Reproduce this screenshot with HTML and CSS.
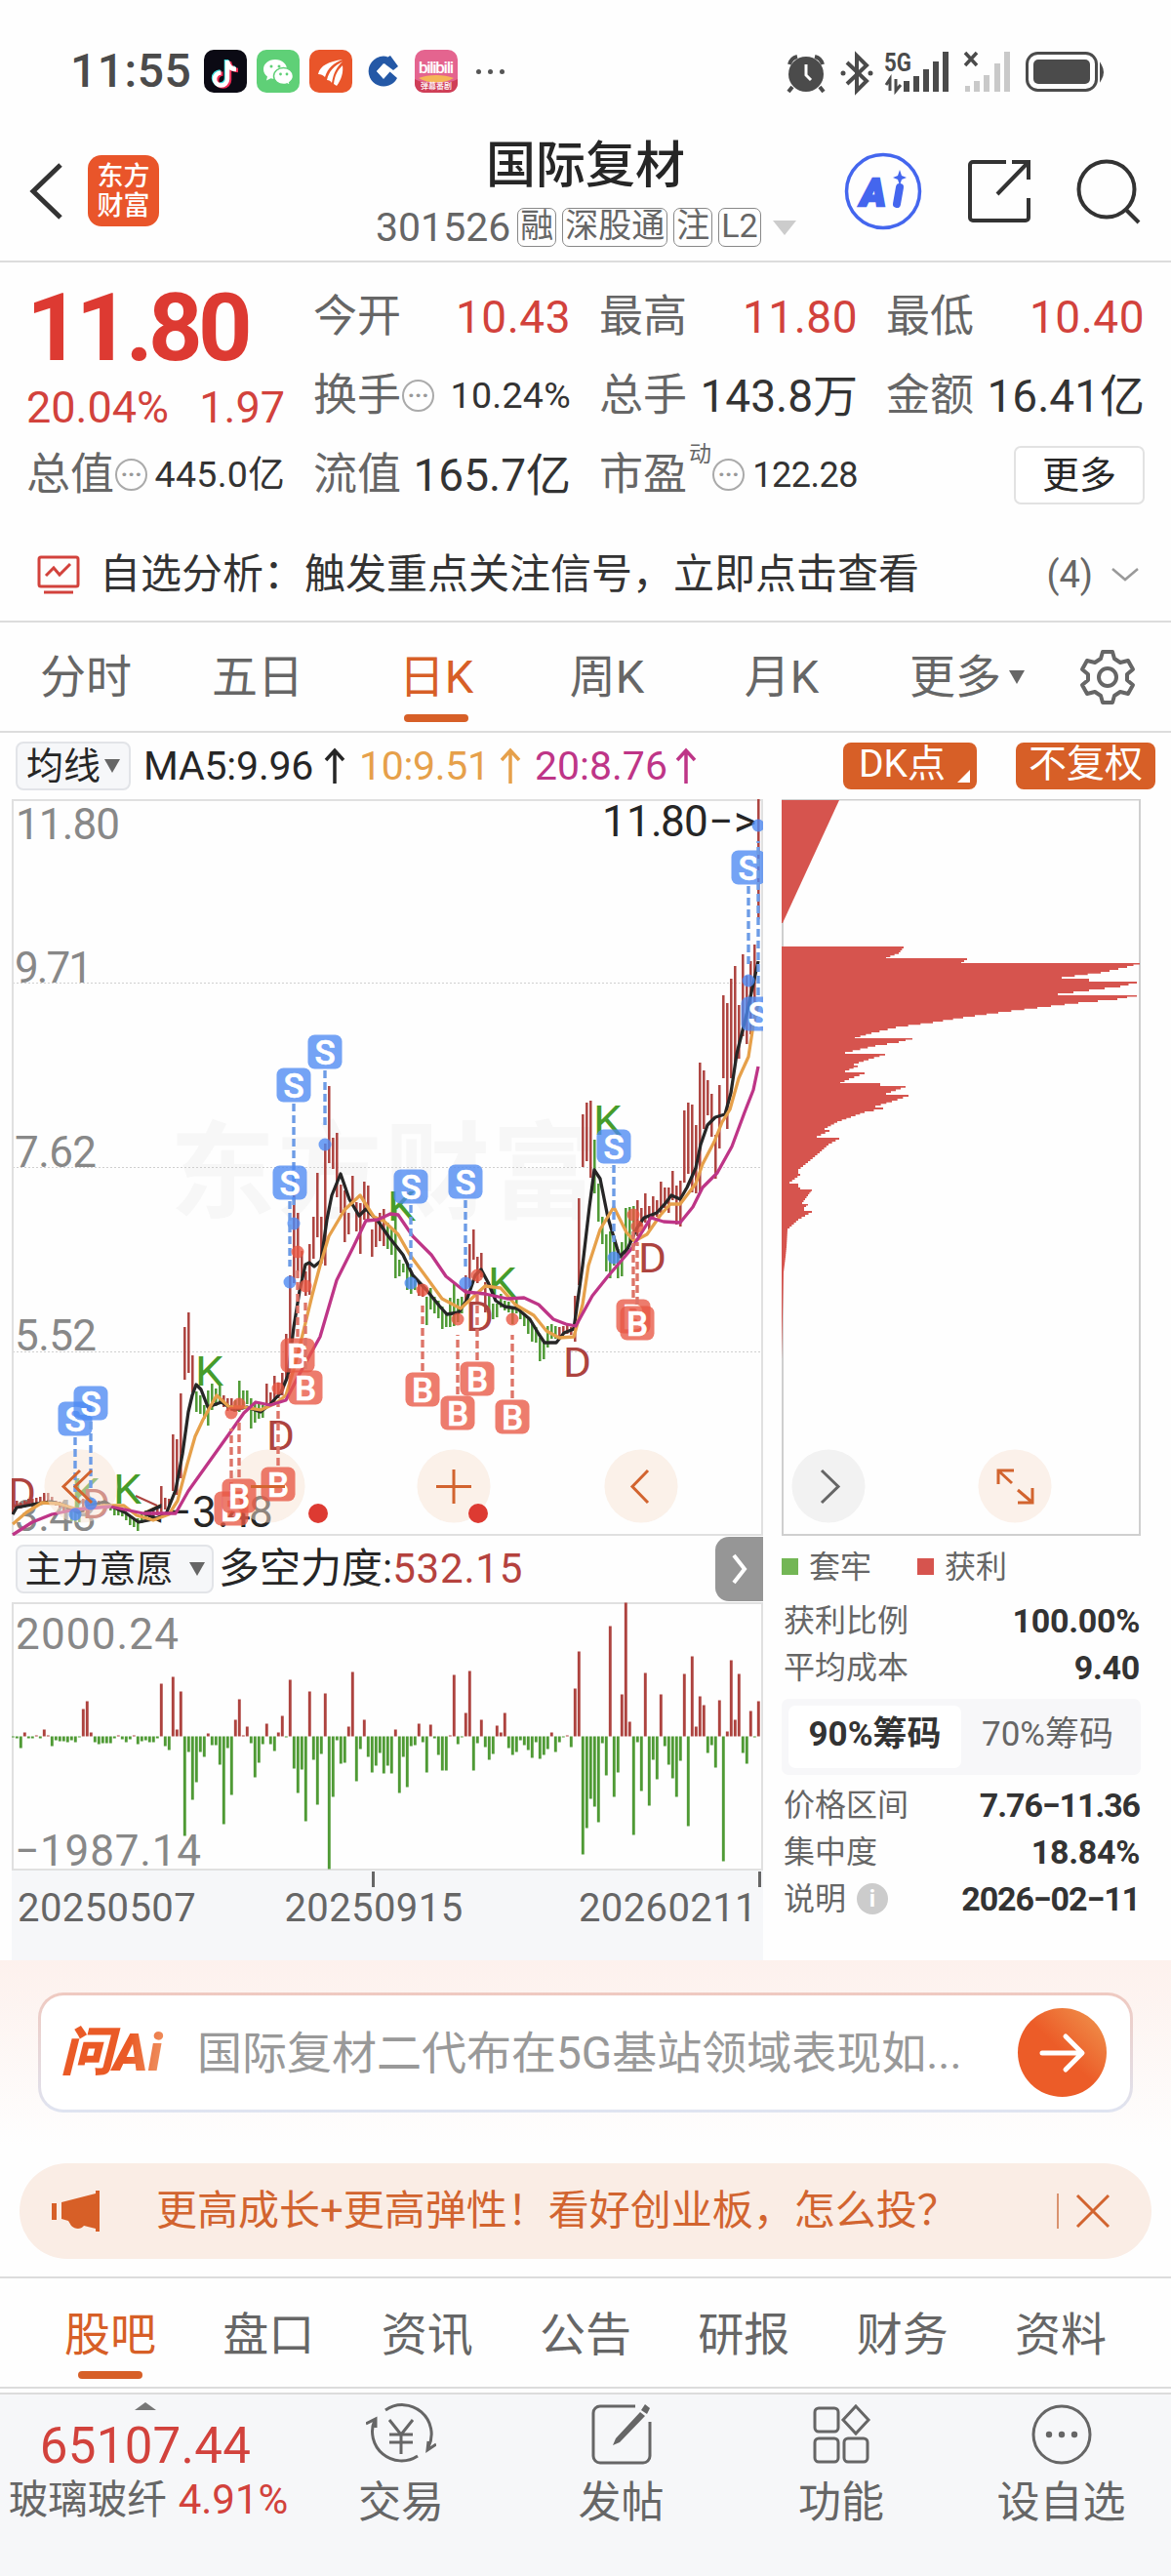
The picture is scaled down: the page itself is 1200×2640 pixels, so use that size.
FILE: index.html
```html
<!DOCTYPE html>
<html lang="zh-CN">
<head>
  <meta charset="UTF-8">
  <meta name="viewport" content="width=device-width, initial-scale=1.0">
  <title>国际复材 301526</title>
  <link rel="stylesheet" href="styles.css">
  <script src="chart.js" defer></script>
</head>
<body>

  <!-- Phone status bar -->
  <div class="status-bar">
    <div class="status-left">
      <span class="clock">11:55</span>
      <svg class="app-icon" viewBox="0 0 44 44">
        <rect width="44" height="44" rx="10" fill="#0b0a14"/>
        <g fill="none" stroke-width="4.5">
          <path d="M22 9v19a6.500 6.500 0 1 1-6.500-6.500M22 10c1 5 4 8 9 8" stroke="#3de0e0" transform="translate(1 1)"/>
          <path d="M25 10v19a6.500 6.500 0 1 1-6.500-6.500M25 11c1 5 4 8 9 8" stroke="#ee2d55" transform="translate(1 2)"/>
          <path d="M24 9v19a6.500 6.500 0 1 1-6.500-6.500M24 10c1 5 4 8 9 8" stroke="#fff" transform="translate(0 2)"/>
        </g>
      </svg>
      <svg class="app-icon" viewBox="0 0 44 44">
        <rect width="44" height="44" rx="10" fill="#5fd077"/>
        <path d="M19 10c-7 0-12 4.500-12 10 0 3 1.600 5.600 4 7.500l-1 4 4.500-2.300c1.400.4 3 .8 4.500.8 7 0 12-4.500 12-10s-5-10-12-10z" fill="#fff"/>
        <path d="M27.500 18.500c-5.500 0-10 3.800-10 8.500s4.500 8.500 10 8.500c1.200 0 2.500-.2 3.500-.6l3.500 1.800-.8-3.200c2.300-1.600 3.800-3.900 3.800-6.500 0-4.700-4.500-8.500-10-8.500z" fill="#fff" stroke="#5fd077" stroke-width="1.500"/>
        <g fill="#5fd077"><circle cx="15" cy="17" r="1.500"/><circle cx="23" cy="17" r="1.500"/><circle cx="24.500" cy="25" r="1.400"/><circle cx="31" cy="25" r="1.400"/></g>
      </svg>
      <svg class="app-icon" viewBox="0 0 44 44">
        <rect width="44" height="44" rx="10" fill="#e9552a"/>
        <path d="M9 25c2-9 11-13 25-15-9 4-15 8-18 18-2-2-4-3-7-3zM18 31c2-9 7-14 16-19-6 6-9 11-11 22-1-2-3-3-5-3zM25 35c1-9 4-14 9-19 1 7-1 14-6 21z" fill="#fff"/>
      </svg>
      <svg class="app-icon ccb" viewBox="0 0 32 32">
        <path d="M20 1A15.500 15.500 0 1 0 30 23L22 16l-6 7-7-7 8-8z" fill="#2458a6"/>
        <path d="M14 5l9-5 8 11-5 4-8-6z" fill="#2458a6"/>
        <path d="M16 8l7 8-7 8-7-8z" fill="#fff"/>
      </svg>
      <svg class="app-icon" viewBox="0 0 44 44">
        <rect width="44" height="44" rx="10" fill="#e4648f"/>
        <path d="M0 30c10 6 34 6 44 0v4c0 6-4 10-10 10H10C4 44 0 40 0 34z" fill="#cf3e57"/>
        <path d="M4 29c10-4 26-4 36 0-10 6-26 6-36 0z" fill="#f5b557"/>
        <text x="22" y="24" class="bili" textLength="36">bilibili</text>
        <text x="22" y="40" class="bili-sub">弹幕番剧</text>
      </svg>
      <span class="more-dots"><i></i><i></i><i></i></span>
    </div>
    <svg class="status-right" viewBox="802 46 334 52">
      <g fill="#4b4b4b">
        <circle cx="826" cy="75" r="18"/>
        <path d="M812 88l-4 5M840 88l4 5M809 65c1-4 4-7 8-8M843 65c-1-4-4-7-8-8" stroke="#4b4b4b" stroke-width="4" fill="none"/>
        <path d="M826 65v11l5 5" stroke="#fff" stroke-width="3" fill="none"/>
        <path d="M868 63l20 19-10 10V56l10 10-20 19" fill="none" stroke="#4b4b4b" stroke-width="4"/>
        <circle cx="864" cy="74" r="2.500"/><circle cx="892" cy="74" r="2.500"/>
        <text x="906" y="72" class="net" textLength="28" lengthAdjust="spacingAndGlyphs">5G</text>
        <path d="M912 92V80l-4 6M918 80v12l5-6" fill="none" stroke="#4b4b4b" stroke-width="3"/>
        <path d="M926 82h6v11h-6zM936 77h6v16h-6zM946 70h6v23h-6zM956 62h6v31h-6zM966 52h6v41h-6z"/>
        <path d="M989 53l12 13M1001 53l-12 13" stroke="#4b4b4b" stroke-width="3.500"/>
        <path d="M989 87h5v6h-5zM998 82h6v11h-6zM1008 76h6v17h-6zM1019 64h6v29h-6zM1029 52h6v41h-6z" fill="#c9c9c9"/>
        <rect x="1052.500" y="53.500" width="71" height="38" rx="11" fill="none" stroke="#4b4b4b" stroke-width="3"/>
        <rect x="1059" y="60" width="58" height="25" rx="5"/>
        <path d="M1128 66q4 7 0 14z" stroke="#4b4b4b" stroke-width="2"/>
      </g>
    </svg>
  </div>

  <!-- Title bar -->
  <header class="title-bar">
    <div class="title-left">
      <svg width="40" height="62" viewBox="0 0 40 62"><path d="M34 4L6 31l28 27" class="line-dark thick"/></svg>
      <div class="brand">东方<br>财富</div>
    </div>
    <div class="title-center">
      <h1>国际复材</h1>
      <div class="code-line">
        <span class="code">301526</span>
        <b>融</b><b>深股通</b><b>注</b><b>L2</b>
        <i class="tri"></i>
      </div>
    </div>
    <div class="title-right">
      <svg width="80" height="80" viewBox="0 0 80 80">
        <circle cx="40" cy="40" r="37.500" fill="none" stroke="#4466ee" stroke-width="3.500"/>
        <text x="17" y="55" class="ai-text">A</text>
        <path d="M57 36l-3 17" stroke="#4466ee" stroke-width="8" stroke-linecap="round"/>
        <path d="M57 18l2 6 5 2-5 2-2 6-2-6-5-2 5-2z" fill="#4466ee"/>
      </svg>
      <svg width="66" height="66" viewBox="0 0 66 66"><path d="M40 3H6a3 3 0 0 0-3 3v54a3 3 0 0 0 3 3h54a3 3 0 0 0 3-3V40M46 3h17v18M62 4L31 36" class="line-dark"/></svg>
      <svg width="68" height="68" viewBox="0 0 68 68"><circle cx="32" cy="32" r="28.500" class="line-dark"/><path d="M51 52l14 14" class="line-dark"/></svg>
    </div>
  </header>

  <!-- Quote numbers -->
  <section class="quote">
    <div class="price-box">
      <div class="price">11.80</div>
      <div class="change"><span>20.04%</span><span>1.97</span></div>
    </div>
    <div class="cell c2"><label>今开</label><span class="up">10.43</span></div>
    <div class="cell c3"><label>最高</label><span class="up">11.80</span></div>
    <div class="cell c4"><label>最低</label><span class="up">10.40</span></div>
    <div class="cell c2"><label>换手<i class="tip">···</i></label><span class="small">10.24%</span></div>
    <div class="cell c3"><label>总手</label><span>143.8万</span></div>
    <div class="cell c4"><label>金额</label><span>16.41亿</span></div>
    <div class="cell c1"><label>总值<i class="tip">···</i></label><span class="small">445.0亿</span></div>
    <div class="cell c2"><label>流值</label><span>165.7亿</span></div>
    <div class="cell c3"><label>市盈<sup>动</sup><i class="tip">···</i></label><span class="small tiny">122.28</span></div>
    <div class="cell c4"><button class="more-btn">更多</button></div>
  </section>

  <div class="analysis">
    <svg width="44" height="40" viewBox="0 0 44 40"><g fill="none" stroke="#d2423c" stroke-width="3"><rect x="2" y="2" width="40" height="30" rx="2"/><path d="M9 21l8-8 6 7 11-11M7 38h30"/></g></svg>
    <p>自选分析：触发重点关注信号，立即点击查看</p>
    <span>(4)</span>
    <svg width="30" height="18" viewBox="0 0 30 18"><path d="M2 3l13 11L28 3" fill="none" stroke="#999" stroke-width="2.500"/></svg>
  </div>

  <nav class="period-tabs">
    <a>分时</a>
    <a>五日</a>
    <a class="active">日K</a>
    <a>周K</a>
    <a>月K</a>
    <a class="period-more">更多<i class="tri"></i></a>
    <svg width="60" height="60" viewBox="0 0 60 60"><g fill="none" stroke="#666" stroke-width="4" stroke-linejoin="round"><path d="M25 4h10l2 7 6 4 8-2 5 9-6 5v6l6 5-5 9-8-2-6 4-2 7H25l-2-7-6-4-8 2-5-9 6-5v-6l-6-5 5-9 8 2 6-4z"/><circle cx="30" cy="30" r="9"/></g></svg>
  </nav>

  <div class="ma-row">
    <div class="pill">均线<i class="tri"></i></div>
    <span class="ma ma5">MA5:9.96</span>
    <svg class="arrow ma5" viewBox="0 0 22 38"><path d="M11 37V3M2 13l9-10 9 10"/></svg>
    <span class="ma ma10">10:9.51</span>
    <svg class="arrow ma10" viewBox="0 0 22 38"><path d="M11 37V3M2 13l9-10 9 10"/></svg>
    <span class="ma ma20">20:8.76</span>
    <svg class="arrow ma20" viewBox="0 0 22 38"><path d="M11 37V3M2 13l9-10 9 10"/></svg>
    <div class="ma-tags">
      <b class="dk">DK点</b>
      <b>不复权</b>
    </div>
  </div>

  <!-- Charts -->
  <main class="charts">
    <div class="chart-left">
      <svg id="kline" width="770" height="755" viewBox="12 819 770 755">
        <text class="watermark" x="174" y="1240" textLength="438">东方财富</text>
        <g class="grid"><path d="M13 1007.500H781M13 1196.500H781M13 1385.500H781"/></g>
        <path class="frame" d="M13 1573V820H781V1573z"/>
        <g class="axis-label">
          <text x="16" y="860" textLength="107">11.80</text>
          <text x="15" y="1007" textLength="80">9.71</text>
          <text x="15" y="1196" textLength="84">7.62</text>
          <text x="15" y="1384" textLength="84">5.52</text>
          <text x="15" y="1569" textLength="84">3.43</text>
        </g>
        <path id="candleUp" class="candle up-line"/>
        <path id="candleDown" class="candle down-line"/>
        <path d="M139 1533L161 1543" stroke="#ad433f" stroke-width="2"/>
        <g id="letters"></g>
        <g class="mark-text">
          <text x="146 171 197 223 232 255" y="1565">&lt;−3.48</text>
          <text x="617 642 667 677 701 726 752" y="857">11.80−&gt;</text>
        </g>
        <g id="maLines"></g>
        <g class="round-btns">
          <circle cx="83" cy="1523" r="37.500"/>
          <circle cx="275" cy="1523" r="37.500"/>
          <circle cx="465" cy="1523" r="37.500"/>
          <circle cx="657" cy="1523" r="37.500"/>
        </g>
        <g id="signals"></g>
        <g class="round-icons">
          <path d="M82 1507L65 1523.500L82 1540M94 1507L77 1523.500L94 1540"/>
          <path d="M257 1523.500H292"/>
          <path d="M447 1523.500H483M465 1506V1541"/>
          <path d="M664 1507L648 1523.500L664 1540"/>
        </g>
        <circle cx="326" cy="1551" r="10" fill="#dd3a32"/>
        <circle cx="490" cy="1551" r="10" fill="#dd3a32"/>
      </svg>

      <div class="sub-row">
        <div class="pill">主力意愿<i class="tri"></i></div>
        <span class="sub-name">多空力度:</span><span class="sub-value">532.15</span>
        <div class="fold"><svg width="16" height="34" viewBox="0 0 16 34"><path d="M2 3l11 14L2 31" fill="none" stroke="#fff" stroke-width="4"/></svg></div>
      </div>

      <svg id="power" width="770" height="275" viewBox="12 1642 770 275">
        <path class="frame" d="M13 1916V1643H781V1916z"/>
        <path id="powerUp" class="candle up-line"/>
        <path id="powerDown" class="candle down-line"/>
        <g class="axis-label">
          <text x="16" y="1690" textLength="167">2000.24</text>
          <text x="15" y="1912" textLength="191">−1987.14</text>
        </g>
      </svg>
      <div class="dates"><span>20250507</span><span>20250915</span><span>20260211</span></div>
    </div>

    <div class="chart-right">
      <svg width="368" height="755" viewBox="801 819 368 755">
        <path class="frame chip-frame" d="M802 1573V819.500H1168V1573z"/>
        <g fill="#d6544e">
          <path d="M801 820H860L802 946H801z"/>
          <path id="chips"/>
        </g>
        <circle cx="849" cy="1523" r="37.500" fill="#f2f2f2"/>
        <path d="M842 1507L859 1523.500L842 1540" fill="none" stroke="#666" stroke-width="3"/>
        <circle cx="1040" cy="1523" r="37.500" fill="#fbf1ea"/>
        <g fill="none" stroke="#d2642f" stroke-width="3"><path d="M1023 1521V1507H1039M1024 1508L1037 1520M1043 1540H1058V1525M1043 1527L1057 1539"/></g>
      </svg>
      <div class="legend"><i class="green"></i><span>套牢</span><i class="red"></i><span>获利</span></div>
      <dl>
        <dt>获利比例</dt><dd>100.00%</dd>
        <dt>平均成本</dt><dd>9.40</dd>
      </dl>
      <div class="toggle"><b>90%筹码</b><span>70%筹码</span></div>
      <dl>
        <dt>价格区间</dt><dd class="range">7.76−11.36</dd>
        <dt>集中度</dt><dd>18.84%</dd>
        <dt>说明<i class="info">i</i></dt><dd class="range">2026−02−11</dd>
      </dl>
    </div>
  </main>

  <!-- Ask AI -->
  <section class="ask">
    <div class="ask-box">
      <div class="ask-logo"><em>问Ai</em></div>
      <p>国际复材二代布在5G基站领域表现如...</p>
      <div class="ask-go"><svg width="50" height="44" viewBox="0 0 50 44"><path d="M4 22h40M28 5l17 17-17 17" fill="none" stroke="#fff" stroke-width="5" stroke-linecap="round" stroke-linejoin="round"/></svg></div>
    </div>
  </section>

  <div class="banner">
    <svg width="50" height="44" viewBox="0 0 50 44" fill="#d75f27"><path d="M0 14h5v17H0zM10 13L45 4V1h4v42h-4v-3l-12-3c-3 4-9 4-13 0l-3-5-7-2z"/></svg>
    <p>更高成长+更高弹性！看好创业板，怎么投？</p>
    <div class="banner-close"><svg width="36" height="36" viewBox="0 0 36 36"><path d="M2 2l32 32M34 2L2 34" stroke="#d2642f" stroke-width="3"/></svg></div>
  </div>

  <nav class="info-tabs">
    <a class="active">股吧</a>
    <a>盘口</a>
    <a>资讯</a>
    <a>公告</a>
    <a>研报</a>
    <a>财务</a>
    <a>资料</a>
  </nav>

  <footer class="bottom-bar">
    <div class="index-box">
      <i class="tri-up"></i>
      <strong>65107.44</strong>
      <p>玻璃玻纤<span>4.91%</span></p>
    </div>
    <a>
      <svg width="72" height="66" viewBox="0 0 72 66"><g class="line-grey"><path d="M20 9a30 30 0 0 1 44 38M53 56A30 30 0 0 1 9 19M0 23l10-5v9M72 44l-9 6 1-9M24 19l12 15 12-15M36 34v20M24 34h24M24 42h24"/></g></svg>
      交易
    </a>
    <a>
      <svg width="72" height="66" viewBox="0 0 72 66"><g class="line-grey"><path d="M50 5H14a7 7 0 0 0-7 7v44a7 7 0 0 0 7 7h44a7 7 0 0 0 7-7V21"/></g><path d="M60 3l5 4-3 6-6-4zM55 11l5 4-26 27-7 3 3-7z" fill="#666"/></svg>
      发帖
    </a>
    <a>
      <svg width="72" height="66" viewBox="0 0 72 66"><g class="line-grey"><rect x="9" y="7" width="24" height="24" rx="4"/><rect x="9" y="38" width="24" height="24" rx="4"/><rect x="39" y="38" width="24" height="24" rx="4"/><path d="M51 5l13 14-13 14-13-14z"/></g></svg>
      功能
    </a>
    <a>
      <svg width="72" height="66" viewBox="0 0 72 66"><g class="line-grey"><circle cx="36" cy="34" r="29"/></g><g fill="#666"><circle cx="23" cy="34" r="3.200"/><circle cx="36" cy="34" r="3.200"/><circle cx="49" cy="34" r="3.200"/></g></svg>
      设自选
    </a>
  </footer>

</body>
</html>
```
FILE: styles.css
```css
* {
  box-sizing: border-box;
}

body {
  margin: 0;
  width: 1200px;
  background: #fefefe;
  color: #333;
  font-family: Roboto, "Noto Sans CJK SC", sans-serif;
  line-height: 1;
}

h1, p, dl, dd {
  margin: 0;
}

i {
  font-style: normal;
}

svg {
  display: block;
  flex: none;
}

.tri {
  display: inline-block;
  border: 8px solid transparent;
  border-top: 14px solid #666;
  border-bottom: 0;
}

.line-dark {
  fill: none;
  stroke: #333;
  stroke-width: 4;
}

.thick {
  stroke-width: 5;
}

.line-grey {
  fill: none;
  stroke: #666;
  stroke-width: 3;
}

/* Status bar */
.status-bar {
  height: 140px;
  padding: 6px 64px 0 72px;
  display: flex;
  justify-content: space-between;
  align-items: center;
}

.status-left {
  display: flex;
  align-items: center;
  gap: 10px;
}

.clock {
  width: 127px;
  font-size: 48px;
  font-weight: 500;
  color: #4b4b4b;
  letter-spacing: 0.5px;
}

.app-icon {
  width: 44px;
  height: 44px;
}

.app-icon.ccb {
  width: 32px;
  height: 32px;
  margin: 0 6px;
}

.bili, .bili-sub {
  fill: #fff;
  font-size: 17px;
  font-weight: 500;
  text-anchor: middle;
}

.bili-sub {
  font-size: 8px;
}

.more-dots {
  display: flex;
  gap: 7px;
  padding-left: 9px;
}

.more-dots i {
  width: 5px;
  height: 5px;
  border-radius: 50%;
  background: #555;
}

.status-right {
  width: 334px;
  height: 52px;
}

.net {
  font-size: 26px;
  font-weight: 700;
}

/* Title bar */
.title-bar {
  height: 129px;
  padding: 0 29px 0 28px;
  display: grid;
  grid-template-columns: 320px 1fr 306px;
  border-bottom: 2px solid #dcdcdc;
}

.title-left {
  display: flex;
  align-items: center;
  gap: 22px;
  height: 111px;
}

.brand {
  width: 73px;
  height: 73px;
  padding-top: 7px;
  border-radius: 14px;
  background: #e9552a;
  color: #fff;
  text-align: center;
  font-size: 27px;
  font-weight: 500;
  line-height: 30px;
}

.title-center h1 {
  padding-top: 3px;
  margin-left: 150px;
  font-size: 51px;
  line-height: 54px;
  font-weight: 500;
  color: #262626;
}

.code-line {
  display: flex;
  align-items: center;
  height: 40px;
  margin: 16px 0 0 37px;
  gap: 6px;
  color: #666;
}

.code {
  font-size: 41px;
  margin-right: 1px;
}

.code-line b {
  height: 40px;
  padding: 0 2px;
  border: 1.500px solid #888;
  border-radius: 7px;
  font-size: 34px;
  line-height: 35px;
  font-weight: 400;
  white-space: nowrap;
}

.code-line .tri {
  border-width: 15px 12px 0;
  border-top-color: #ccc;
  margin-left: 6px;
}

.title-right {
  display: flex;
  align-items: center;
  justify-content: space-between;
  height: 111px;
  width: 305px;
}

.ai-text {
  font-size: 39px;
  font-weight: 900;
  font-style: italic;
  fill: #4466ee;
  stroke: #4466ee;
  stroke-width: 2.500;
}

/* Quote */
.quote {
  display: grid;
  grid-template-columns: 265px 264px 265px 265px;
  grid-template-rows: 81px 81px 81px;
  column-gap: 29px;
  padding: 15px 28px 0 27px;
  height: 281px;
}

.price-box {
  grid-row: span 2;
}

.price {
  font-size: 97px;
  line-height: 104px;
  font-weight: 700;
  color: #dd3a32;
  letter-spacing: -4.800px;
}

.change {
  display: flex;
  justify-content: space-between;
  color: #d2423c;
  font-size: 45px;
  line-height: 60px;
  letter-spacing: 0;
}

.cell {
  display: flex;
  justify-content: space-between;
  align-items: center;
  height: 81px;
  white-space: nowrap;
  font-size: 46px;
}

.cell label {
  display: flex;
  align-items: center;
  font-size: 45px;
  color: #666;
}

.cell .up {
  color: #d2423c;
  letter-spacing: 0.5px;
}

.cell .small {
  font-size: 37.500px;
  letter-spacing: 0.3px;
}

.cell .tiny {
  font-size: 36px;
  letter-spacing: -0.5px;
}

.cell sup {
  font-size: 23px;
  align-self: flex-start;
  margin: -10px 0 0 2px;
}

.tip {
  width: 33px;
  height: 33px;
  margin-left: 1px;
  border: 2px solid #aaa;
  border-radius: 50%;
  color: #999;
  font-size: 24px;
  line-height: 28px;
  text-align: center;
  font-weight: 700;
}

.cell.c4 .more-btn {
  margin-left: auto;
}

.more-btn {
  width: 134px;
  height: 60px;
  padding: 0;
  border: 2px solid #e2e2e2;
  border-radius: 7px;
  background: #fff;
  font: inherit;
  font-size: 38px;
  line-height: 50px;
  color: #262626;
}

.analysis {
  display: flex;
  align-items: center;
  height: 88px;
  padding: 0 32px 8px 38px;
  border-bottom: 2px solid #dcdcdc;
}

.analysis p {
  margin-left: 20px;
  font-size: 42px;
  color: #333;
}

.analysis span {
  margin: 0 18px 0 auto;
  font-size: 38px;
  color: #666;
}

/* Period tabs */
.period-tabs {
  height: 113px;
  display: grid;
  grid-template-columns: 176px 176px 190px 160px 198px 182px 106px;
  justify-items: center;
  align-items: center;
  font-size: 47px;
  color: #666;
  border-bottom: 2px solid #dcdcdc;
}

.period-tabs .active, .info-tabs .active {
  color: #d75f27;
  position: relative;
}

.active::after {
  content: "";
  position: absolute;
  left: 50%;
  bottom: -23px;
  width: 66px;
  margin-left: -33px;
  height: 8px;
  border-radius: 4px;
  background: #d75f27;
}

.period-more {
  display: flex;
  align-items: center;
  gap: 8px;
}

/* Moving averages */
.ma-row {
  display: flex;
  align-items: center;
  height: 68px;
  padding: 0 16px;
}

.pill {
  display: flex;
  align-items: center;
  justify-content: center;
  gap: 4px;
  width: 118px;
  height: 50px;
  border: 2px solid #e2e4e8;
  border-radius: 8px;
  background: #f6f7f9;
  color: #262626;
  font-size: 38px;
}

.ma {
  font-size: 41px;
  white-space: nowrap;
}

.ma5 {
  width: 185px;
  margin-left: 13px;
  color: #262626;
  letter-spacing: -0.2px;
}

.ma10 {
  width: 144px;
  color: #e6a04a;
  letter-spacing: -0.3px;
}

.ma20 {
  width: 144px;
  color: #be3587;
}

.arrow {
  width: 22px;
  height: 38px;
  margin: 0 14px 0 0;
  fill: none;
  stroke: currentColor;
  stroke-width: 3.500;
}

.ma-tags {
  display: flex;
  gap: 40px;
  margin-left: auto;
}

.ma-tags b {
  position: relative;
  width: 143px;
  height: 48px;
  border-radius: 8px;
  background: #d75f27;
  color: #fff;
  font-size: 39px;
  font-weight: 400;
  line-height: 44px;
  text-align: center;
}

.ma-tags .dk {
  width: 137px;
  padding-right: 16px;
}

.dk::after {
  content: "";
  position: absolute;
  right: 7px;
  bottom: 7px;
  border-left: 13px solid transparent;
  border-bottom: 13px solid #fff;
}

/* Charts */
.charts {
  display: grid;
  grid-template-columns: 770px 368px;
  column-gap: 19px;
  padding-left: 12px;
  height: 1190px;
}

.frame {
  fill: none;
  stroke: #e0e0e0;
  stroke-width: 2;
}

.chip-frame {
  stroke: #cfcfcf;
}

.grid path {
  stroke: #cfcfcf;
  stroke-width: 1;
  stroke-dasharray: 2 2;
}

.watermark {
  font-size: 108px;
  font-weight: 700;
  fill: #f7f7f7;
}

.axis-label {
  font-size: 44px;
  fill: #888;
}

.mark-text {
  font-size: 44px;
  fill: #262626;
}

.candle {
  fill: none;
  stroke-width: 2.500;
}

#power .candle {
  stroke-width: 2.900;
}

.up-line {
  stroke: #ad433f;
}

.down-line {
  stroke: #4f9a35;
}

#maLines polyline {
  fill: none;
  stroke-width: 3.300;
  stroke-linejoin: round;
}

#letters {
  font-size: 43px;
}

#letters .k {
  fill: #469c2b;
}

#letters .d {
  fill: #ad433f;
}

#signals text {
  font-size: 35px;
  font-weight: 500;
  fill: #fff;
  stroke: #fff;
  stroke-width: 0.600;
  text-anchor: middle;
}

#signals line {
  stroke-width: 3.400;
  stroke-dasharray: 8 4;
}

.round-btns circle {
  fill: #f8e3d4;
  opacity: 0.5;
}

.round-icons path {
  fill: none;
  stroke: #d2642f;
  stroke-width: 3;
}

.sub-row {
  display: flex;
  align-items: center;
  height: 68px;
  padding-left: 4px;
}

.sub-row .pill {
  width: 203px;
  gap: 16px;
  margin-right: 5px;
}

.sub-name, .sub-value {
  font-size: 42px;
  color: #262626;
}

.sub-value {
  color: #b5423e;
  letter-spacing: 0.8px;
}

.fold {
  display: flex;
  align-items: center;
  justify-content: center;
  width: 49px;
  height: 66px;
  margin-left: auto;
  border-radius: 14px 0 0 14px;
  background: #969696;
}

.dates {
  position: relative;
  display: flex;
  justify-content: space-between;
  height: 92px;
  padding: 19px 6px 0 6px;
  background: #f6f7f9;
  color: #666;
  font-size: 40px;
  letter-spacing: 0.4px;
}

.dates::before, .dates::after {
  content: "";
  position: absolute;
  top: 1px;
  left: 369px;
  width: 3px;
  height: 16px;
  background: #666;
}

.dates::after {
  left: 765px;
}

.dates span:nth-child(2) {
  margin-left: -28px;
}

.legend {
  display: flex;
  align-items: center;
  height: 63px;
  color: #666;
  font-size: 32px;
}

.legend i {
  width: 17px;
  height: 17px;
  margin-right: 11px;
}

.legend span {
  margin-right: 47px;
}

.green {
  background: #73b655;
}

.red {
  background: #d6544e;
}

.chart-right dl {
  display: grid;
  grid-template-columns: auto 1fr;
  grid-auto-rows: 48px;
  align-items: center;
  padding: 0 1px 0 2px;
}

dt {
  display: flex;
  align-items: center;
  font-size: 32px;
  color: #666;
}

dd {
  text-align: right;
  font-size: 34px;
  font-weight: 700;
  letter-spacing: -0.3px;
}

.range {
  letter-spacing: -1.100px;
}

.info {
  width: 32px;
  height: 32px;
  margin-left: 11px;
  border-radius: 50%;
  background: #ccc;
  color: #fff;
  text-align: center;
  font-size: 24px;
  font-weight: 700;
  line-height: 33px;
}

.toggle {
  display: flex;
  height: 78px;
  margin: 8px 0 7px;
  padding: 7px;
  border-radius: 7px;
  background: #f7f7f9;
  font-size: 35px;
  line-height: 60px;
  text-align: center;
  color: #666;
}

.toggle b {
  width: 177px;
  border-radius: 7px;
  background: #fff;
  color: #333;
}

.toggle span {
  flex: 1;
}

/* Ask AI */
.ask {
  height: 208px;
  padding: 33px 39px 0;
  background: linear-gradient(#fdf1ed, #fefefe 190px);
}

.ask-box {
  display: flex;
  align-items: center;
  height: 123px;
  padding: 0 24px 0 20px;
  border: 3px solid transparent;
  border-radius: 26px;
  background: linear-gradient(#fff, #fff) padding-box, linear-gradient(#efc9c0, #dfe4f1) border-box;
}

.ask-logo {
  width: 140px;
  font-size: 54px;
  font-weight: 900;
}

.ask-logo em {
  padding-right: 8px;
  background: linear-gradient(100deg, #ea5a26 60%, #f0a070);
  -webkit-background-clip: text;
  color: transparent;
}

.ask-box p {
  font-size: 46px;
  color: #999;
}

.ask-go {
  display: flex;
  align-items: center;
  justify-content: center;
  width: 91px;
  height: 91px;
  margin-left: auto;
  border-radius: 50%;
  background: linear-gradient(45deg, #ec5c28 50%, #f09850);
}

.banner {
  display: flex;
  align-items: center;
  height: 98px;
  margin: 0 20px 18px;
  padding: 0 42px 0 33px;
  border-radius: 49px;
  background: #faede5;
  color: #d2642f;
}

.banner p {
  margin-left: 57px;
  font-size: 42px;
  white-space: nowrap;
}

.banner-close {
  margin-left: auto;
  padding-left: 17px;
  border-left: 2px solid #d9936f;
}

/* Info tabs */
.info-tabs {
  display: flex;
  justify-content: space-between;
  height: 115px;
  padding: 34px 66px 0;
  border-top: 2px solid #dcdcdc;
  border-bottom: 2px solid #dcdcdc;
  font-size: 47px;
  color: #666;
}

.info-tabs .active::after {
  bottom: 8px;
}

/* Bottom bar */
.bottom-bar {
  display: grid;
  grid-template-columns: 298px 226px 225px 226px 225px;
  height: 188px;
  margin-top: 4px;
  padding-top: 7px;
  border-top: 2px solid #dcdcdc;
  background: #f6f7f9;
  color: #666;
}

.bottom-bar a {
  display: flex;
  flex-direction: column;
  align-items: center;
  gap: 16px;
  font-size: 44px;
}

.index-box {
  display: flex;
  flex-direction: column;
  align-items: center;
}

.tri-up {
  border: 11px solid transparent;
  border-bottom: 8px solid #777;
  border-top: 0;
  margin-top: 1px;
}

.index-box strong {
  margin-top: 11px;
  font-size: 51px;
  font-weight: 400;
  letter-spacing: 0.3px;
  color: #d2423c;
}

.index-box p {
  margin: 9px 0 0 6px;
  font-size: 40.500px;
  white-space: nowrap;
}

.index-box p span {
  margin-left: 12px;
  font-size: 42px;
  color: #d2423c;
}
```
FILE: chart.js
```js
// x of the i-th trading day, one bar every 4px
const dayX = i => 13.3 + i * 4;

// [first day, colour, [high, low], ...]
const candles = [
  [0, 'r', [1530, 1552], [1538, 1546], [1540, 1546], [1538, 1545], [1536, 1543], [1536, 1542], [1535, 1541], [1534, 1539], [1530, 1539], [1530, 1540], [1534, 1541], [1538, 1543], [1539, 1545], [1542, 1548], [1543, 1550]],
  [15, 'g', [1548, 1559], [1550, 1560], [1549, 1560]],
  [18, 'r', [1536, 1550], [1533, 1547], [1536, 1547], [1538, 1546], [1538, 1545], [1540, 1546], [1541, 1546]],
  [25, 'g', [1542, 1548], [1545, 1553], [1545, 1553], [1546, 1554], [1550, 1558], [1553, 1563], [1556, 1565], [1556, 1569], [1551, 1561], [1548, 1556]],
  [35, 'r', [1547, 1555], [1545, 1554], [1543, 1553], [1523, 1553], [1535, 1547], [1536, 1545], [1470, 1528], [1475, 1532], [1428, 1515], [1360, 1414], [1345, 1407], [1389, 1427]],
  [47, 'g', [1426, 1447], [1430, 1449], [1440, 1454], [1425, 1461], [1418, 1445], [1423, 1441], [1420, 1437]],
  [54, 'r', [1430, 1442], [1433, 1446], [1433, 1446]],
  [57, 'g', [1435, 1447], [1415, 1447], [1425, 1442], [1425, 1439], [1433, 1464], [1437, 1458], [1437, 1454], [1440, 1453]],
  [65, 'r', [1418, 1438], [1427, 1440], [1410, 1437], [1417, 1433], [1407, 1430], [1367, 1413], [1307, 1407], [1207, 1315], [1243, 1303], [1282, 1310], [1303, 1328], [1275, 1327], [1247, 1290], [1202, 1268], [1247, 1295], [1172, 1297], [1113, 1192], [1166, 1198], [1161, 1227], [1214, 1243], [1220, 1273], [1243, 1265], [1205, 1233], [1232, 1262], [1233, 1285], [1211, 1250], [1215, 1250], [1260, 1288], [1247, 1278], [1243, 1272], [1239, 1277]],
  [96, 'g', [1253, 1280], [1260, 1286], [1240, 1310], [1291, 1308], [1295, 1304], [1295, 1322], [1305, 1326], [1312, 1322]],
  [104, 'r', [1315, 1328], [1316, 1329]],
  [106, 'g', [1329, 1358], [1320, 1342], [1329, 1346], [1333, 1351], [1339, 1362], [1345, 1360], [1330, 1360], [1314, 1359], [1331, 1355], [1329, 1346]],
  [116, 'r', [1307, 1336], [1275, 1319], [1260, 1291], [1288, 1315], [1284, 1309], [1314, 1345]],
  [122, 'g', [1328, 1346], [1336, 1352], [1336, 1350], [1326, 1340], [1333, 1343], [1334, 1345], [1340, 1357], [1329, 1346], [1341, 1352], [1346, 1359], [1352, 1367], [1355, 1375], [1360, 1376], [1371, 1395], [1376, 1393], [1359, 1381], [1357, 1372], [1359, 1372]],
  [140, 'r', [1360, 1371], [1359, 1367], [1358, 1367], [1360, 1368], [1328, 1375], [1228, 1317], [1142, 1196], [1130, 1190], [1128, 1207]],
  [149, 'g', [1168, 1223], [1213, 1252], [1247, 1275], [1265, 1303], [1262, 1310], [1267, 1297], [1280, 1310], [1273, 1308], [1238, 1287], [1237, 1275], [1236, 1267]],
  [160, 'r', [1230, 1267], [1238, 1257], [1223, 1253], [1236, 1260], [1226, 1250], [1230, 1247], [1211, 1243], [1217, 1238], [1217, 1243], [1200, 1230], [1215, 1255], [1210, 1257], [1138, 1212], [1130, 1203], [1132, 1222], [1153, 1223], [1089, 1222], [1097, 1157], [1107, 1143], [1121, 1165], [1163, 1208], [1112, 1177], [1020, 1105], [1028, 1157], [1003, 1105], [990, 1090], [1030, 1085], [978, 1062], [1000, 1070], [985, 1060], [968, 1050], [819, 942]]
];

const paths = { r: '', g: '' };
candles.forEach(([start, colour, ...bars]) => {
  bars.forEach(([high, low], n) => {
    paths[colour] += `M${dayX(start + n)} ${high}V${low}`;
  });
});
document.getElementById('candleUp').setAttribute('d', paths.r);
document.getElementById('candleDown').setAttribute('d', paths.g);

// Moving averages
const averages = {
  '#262626': '13,1552 17,1545 33,1542 53,1539 67,1543 80,1550 93,1543 107,1539 117,1545 128,1550 142,1560 157,1557 170,1552 180,1527 187,1490 193,1447 197,1430 201,1419 206,1424 213,1442 227,1437 240,1445 253,1442 267,1447 277,1439 288,1427 295,1410 301,1360 307,1323 313,1296 317,1294 322,1298 329,1292 335,1250 340,1225 349,1203 358,1229 368,1246 375,1239 387,1251 398,1267 413,1286 423,1307 437,1322 450,1338 458,1347 470,1345 478,1333 487,1307 493,1301 500,1314 508,1333 517,1339 530,1341 543,1352 552,1367 558,1376 570,1376 578,1366 588,1362 597,1297 604,1237 609,1199 615,1208 623,1248 635,1288 643,1280 653,1258 660,1248 673,1243 682,1233 688,1225 697,1229 704,1217 713,1197 718,1173 725,1153 733,1145 743,1142 749,1120 755,1080 765,1040 777,985',
  '#e6a04a': '13,1562 27,1550 43,1540 60,1541 80,1547 107,1543 127,1543 140,1553 157,1558 173,1552 182,1538 192,1500 200,1472 208,1455 222,1430 235,1442 250,1442 267,1445 283,1438 293,1430 302,1400 312,1360 320,1327 328,1297 337,1267 353,1240 369,1225 383,1247 393,1251 408,1265 420,1286 437,1309 453,1331 472,1341 483,1331 497,1318 513,1320 528,1337 547,1348 560,1364 573,1371 588,1370 597,1337 603,1297 615,1260 629,1237 642,1263 650,1272 663,1265 677,1245 687,1234 697,1234 713,1213 720,1193 732,1170 740,1150 748,1137 757,1105 767,1083 772,1050 777,1028',
  '#be3587': '13,1573 33,1560 53,1552 77,1547 113,1544 147,1551 180,1551 193,1528 213,1500 233,1472 250,1448 262,1437 277,1440 293,1435 307,1408 328,1370 345,1312 362,1278 375,1251 387,1250 400,1244 408,1245 423,1267 442,1286 457,1308 477,1324 497,1326 520,1331 537,1330 552,1337 567,1352 580,1357 590,1359 607,1328 623,1308 647,1280 667,1248 680,1252 697,1253 710,1237 720,1217 735,1202 750,1175 763,1140 772,1117 777,1093'
};
document.getElementById('maLines').innerHTML = Object.entries(averages)
  .map(([colour, points]) => `<polyline points="${points}" stroke="${colour}"/>`).join('');

// K / D letters: [letter, x, baseline]
const letters = [
  ['K', 200, 1420], ['K', 116, 1541], ['K', 73, 1545], ['K', 397, 1251], ['K', 500, 1329], ['K', 608, 1163],
  ['D', 8, 1545], ['D', 84, 1556], ['D', 273, 1486], ['D', 477, 1364], ['D', 654, 1304], ['D', 577, 1411]
];
document.getElementById('letters').innerHTML = letters
  .map(([t, x, y]) => `<text class="${t.toLowerCase()}" x="${x}" y="${y}" textLength="29" lengthAdjust="spacingAndGlyphs">${t}</text>`).join('');

// Sell / buy signals: [type, x, tile centre y, dot y]
const signals = [
  ['S', 77, 1454, 1552], ['S', 93, 1438, 1541], ['S', 333, 1078, 1173], ['S', 301, 1112, 1254], ['S', 297, 1212, 1314],
  ['S', 421, 1216, 1315], ['S', 477, 1211, 1315], ['S', 629, 1175, 1289], ['S', 767, 889, 1005], ['S', 777, 1039, 846],
  ['B', 305, 1389, 1283], ['B', 313, 1422, 1318], ['B', 237, 1546, 1448], ['B', 245, 1533, 1439], ['B', 285, 1521, 1423],
  ['B', 433, 1424, 1322], ['B', 469, 1448, 1352], ['B', 489, 1413, 1307], ['B', 525, 1452, 1352],
  ['B', 649, 1349, 1245], ['B', 653, 1356, 1257]
];
document.getElementById('signals').innerHTML = signals.map(([t, x, y, dot]) => {
  const fill = t === 'S' ? '#4d89f2' : '#e85744';
  const line = t === 'S' ? '#6d9ce6' : '#dd7468';
  const dir = dot > y ? 1 : -1;
  return `<line x1="${x}" x2="${x}" y1="${y + dir * 19}" y2="${dot - dir * 16}" stroke="${line}"/>
    <circle cx="${x}" cy="${dot}" r="6.5" fill="${fill}" opacity="0.8"/>
    <rect x="${x - 17.5}" y="${y - 17.5}" width="35" height="35" rx="7" fill="${fill}" opacity="0.78"/>
    <text x="${x}" y="${y + 12.5}">${t}</text>`;
}).join('');

// Long / short power, in px from the zero line
const power = [
  -1, -2, -12, 4, -2, -2, 1, -2, 7, 1, -10, -4, -5, -5, -6, -4, -6, -1, 28, 36, 4, -6, -8, -7, -7, -7, -2, 1, -3, -6, -3, 1,
  -8, -5, -4, -6, -6, -2, 54, -10, -14, 61, 7, 46, -102, -16, -65, -47, -16, -21, 3, -9, -9, -29, -90, -12, -60, 17, 38, 1,
  10, -7, -42, -27, -8, 13, -8, -15, 4, 21, -1, 58, -33, -58, -34, -87, 46, -24, -70, -18, 44, -136, -62, -4, -28, -27, 10,
  66, -46, -13, 17, -21, -37, -30, -17, -38, -30, -38, 7, -58, -21, -52, -10, -9, 13, -6, -37, 12, -2, -19, -35, -35, 1, 63,
  -8, -1, 24, 67, -35, -7, 17, -11, -24, -18, 11, 4, 24, -12, -19, -16, -4, -9, -14, -22, -6, -23, -19, -13, 4, -16, -6, -1,
  1, -11, 49, 87, -121, -94, -64, -72, -88, -7, -40, 113, -62, -37, 43, 137, 15, -101, -6, -56, 65, -71, -24, -44, 43, -10,
  -29, -43, -62, -25, 64, -92, 82, 10, 41, 32, -17, -9, -32, 37, -128, 5, 78, 17, 64, -17, -28, 26, -1, 36
];
const powerPath = test => power.map((v, i) => test(v) ? `M${dayX(i)} 1779.5V${1779.5 - v}` : '').join('');
document.getElementById('powerUp').setAttribute('d', powerPath(v => v > 0));
document.getElementById('powerDown').setAttribute('d', powerPath(v => v < 0));

// Chip distribution outline: [y, x]
const chips = [
  [970, 926], [976, 921], [981, 908], [982, 991], [986, 985], [987, 1168], [990, 1155], [996, 1128], [1001, 1088],
  [1003, 1116], [1005, 1116], [1006, 1165], [1010, 1148], [1014, 1116], [1018, 1084], [1020, 1165], [1023, 1145],
  [1027, 1105], [1032, 1063], [1037, 1023], [1042, 987], [1047, 956], [1052, 918], [1058, 893], [1063, 876], [1064, 935],
  [1067, 921], [1071, 897], [1078, 866], [1080, 907], [1085, 890], [1090, 875], [1092, 879], [1097, 866], [1099, 886],
  [1105, 870], [1109, 861], [1110, 902], [1113, 928], [1120, 908], [1122, 931], [1128, 914], [1133, 897], [1135, 905],
  [1139, 886], [1144, 872], [1149, 858], [1156, 845], [1158, 850], [1164, 837], [1166, 860], [1172, 849], [1180, 840],
  [1190, 828], [1198, 818], [1203, 820], [1211, 809], [1213, 818], [1217, 820], [1219, 832], [1224, 828], [1232, 822],
  [1234, 828], [1237, 824], [1241, 832], [1249, 818], [1259, 807], [1277, 806], [1287, 805], [1303, 803], [1392, 801]
];
// each level is a flat row about two pixels tall
let outline = 'M801 970';
chips.forEach(([y, x], n) => {
  const prev = n ? chips[n - 1] : null;
  if (prev && prev[1] > x) {
    const steps = Math.max(1, Math.round((y - prev[0]) / 2));
    for (let s = 1; s <= steps; s++) {
      outline += `V${prev[0] + (y - prev[0]) * s / steps}H${prev[1] + (x - prev[1]) * s / steps}`;
    }
  } else {
    outline += `V${y}H${x}`;
  }
});
document.getElementById('chips').setAttribute('d', outline + 'H801z');
```
